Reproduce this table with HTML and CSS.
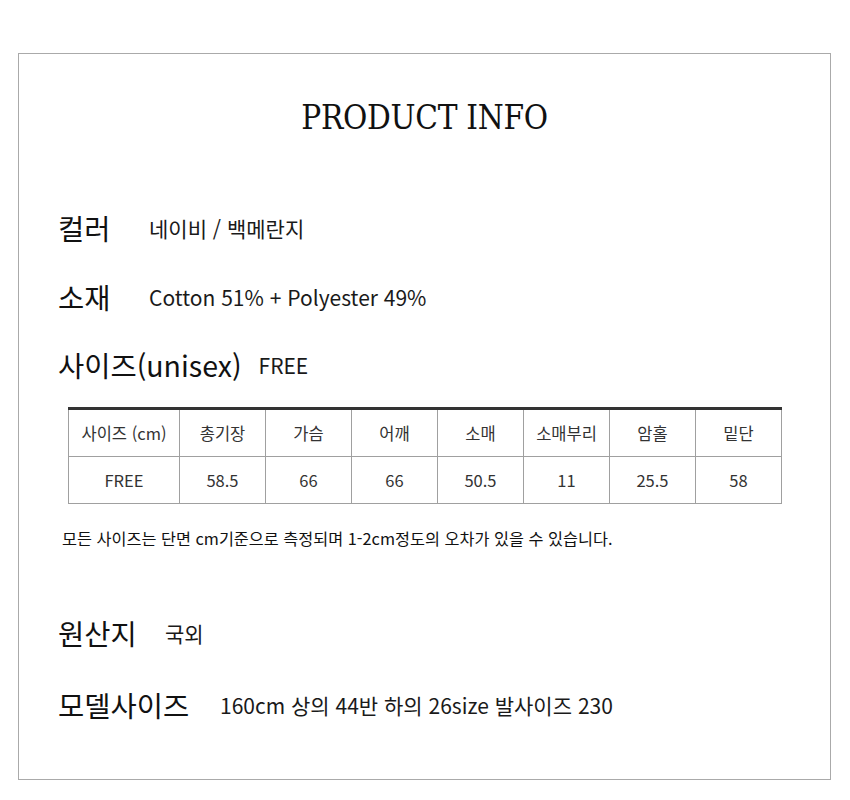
FILE: index.html
```html
<!DOCTYPE html>
<html lang="ko">
<head>
<meta charset="utf-8">
<link rel="stylesheet" href="styles.css">
</head>
<body>
<div class="box">
  <h1 class="title">PRODUCT INFO</h1>
  <div class="row r-color"><span class="label">컬러</span><span class="value">네이비 / 백메란지</span></div>
  <div class="row r-mat"><span class="label">소재</span><span class="value">Cotton 51% + Polyester 49%</span></div>
  <div class="row r-size"><span class="label">사이즈(unisex)</span><span class="value">FREE</span></div>
  <table class="size-table">
    <tr>
      <th class="first">사이즈 (cm)</th><th>총기장</th><th>가슴</th><th>어깨</th><th>소매</th><th>소매부리</th><th>암홀</th><th>밑단</th>
    </tr>
    <tr>
      <td>FREE</td><td>58.5</td><td>66</td><td>66</td><td>50.5</td><td>11</td><td>25.5</td><td>58</td>
    </tr>
  </table>
  <p class="note">모든 사이즈는 단면 cm기준으로 측정되며 1-2cm정도의 오차가 있을 수 있습니다.</p>
  <div class="row r-origin"><span class="label">원산지</span><span class="value">국외</span></div>
  <div class="row r-model"><span class="label">모델사이즈</span><span class="value">160cm 상의 44반 하의 26size 발사이즈 230</span></div>
</div>
</body>
</html>
```
FILE: styles.css
```css
html, body { margin: 0; padding: 0; background: #fff; }
body { font-family: "Noto Sans CJK KR", "Noto Sans", sans-serif; color: #111; }
.box {
  margin: 53px 0 0 18px;
  width: 811px;
  height: 725px;
  border: 1px solid #aaa;
  box-sizing: content-box;
  padding: 0;
}
.title {
  margin: 42px 0 0 0;
  text-align: center;
  font-family: "DejaVu Serif", serif;
  font-stretch: condensed;
  font-weight: normal;
  font-size: 33px;
  letter-spacing: -0.3px;
  line-height: 44px;
  color: #111;
}
.row { display: flex; align-items: center; padding-left: 39px; }
.label { font-size: 28.5px; line-height: 36px; color: #111; }
.value { font-size: 21px; line-height: 30px; color: #1a1a1a; }
.r-color { margin-top: 70px; }
.r-color .label, .r-mat .label { width: 91px; }
.r-mat { margin-top: 33px; }
.r-size { margin-top: 32px; }
.r-size .value { margin-left: 17px; }
.size-table {
  margin: 24px 0 0 49px;
  border-collapse: collapse;
  font-size: 16.5px;
  color: #333;
}
.size-table th, .size-table td {
  border: 1px solid #a0a0a0;
  width: 85px;
  height: 46px;
  padding: 0;
  text-align: center;
  font-weight: normal;
}
.size-table tr:first-child th { border-top: 3px solid #333; }
.size-table .first { width: 110px; }
.note { margin: 22px 0 0 43px; font-size: 16.3px; line-height: 24px; color: #111; }
.r-origin { margin-top: 65px; }
.r-origin .label { width: 107px; }
.r-model { margin-top: 36px; }
.r-model .label { width: 162px; }
```
